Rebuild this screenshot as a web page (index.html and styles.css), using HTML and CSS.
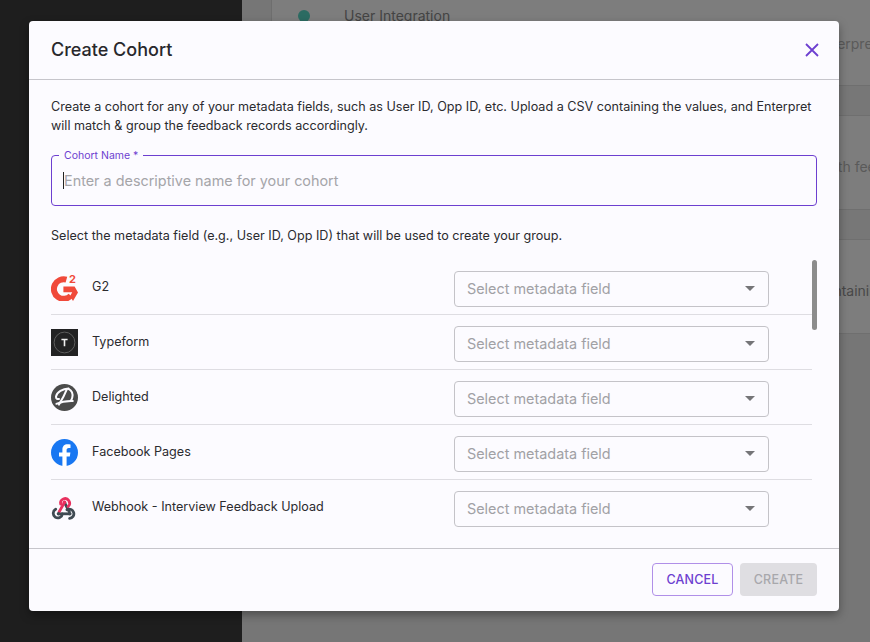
FILE: index.html
```html
<!DOCTYPE html>
<html lang="en">
<head>
<meta charset="utf-8">
<title>Create Cohort</title>
<link rel="stylesheet" href="styles.css">
</head>
<body>
<div class="app">
  <aside class="sidebar"></aside>
  <main class="main">
    <div class="table">
      <div class="bg-row bg-row-first">
        <span class="dot"></span><span class="bg-name">User Integration</span>
        <span class="bg-text bg-text-a">Enterpret</span>
      </div>
      <div class="bg-band"></div>
      <div class="bg-row"><span class="bg-text bg-text-b">with feedback</span></div>
      <div class="bg-band"></div>
      <div class="bg-row"><span class="bg-text bg-text-c">containing</span></div>
    </div>
  </main>
</div>

<section class="modal" role="dialog" aria-label="Create Cohort">
  <header class="modal-head">
    <h2 class="modal-title">Create Cohort</h2>
    <svg class="close" viewBox="0 0 14 14" width="14" height="14" aria-hidden="true"><path d="M1 1l12 12M13 1L1 13"/></svg>
  </header>

  <div class="modal-body">
    <p class="intro">Create a cohort for any of your metadata fields, such as User ID, Opp ID, etc. Upload a CSV containing the values, and Enterpret will match &amp; group the feedback records accordingly.</p>

    <div class="field">
      <span class="field-label">Cohort Name *</span>
      <span class="caret-bar"></span><span class="placeholder">Enter a descriptive name for your cohort</span>
    </div>

    <p class="hint">Select the metadata field (e.g., User ID, Opp ID) that will be used to create your group.</p>

    <div class="list">
      <div class="rows">
        <div class="row">
          <svg class="icon" viewBox="0 0 27 27" aria-hidden="true">
            <path d="M15.400 5.600A9.800 9.800 0 1 0 19.800 21.800" fill="none" stroke="#f0493a" stroke-width="6"/>
            <path d="M12.400 12.400h11.200l3.400 6-5 8.600-3-4.800 2.200-4h-8.800z" fill="#f0493a"/>
            <text x="18" y="8.800" class="g2-two">2</text>
          </svg>
          <span class="row-name">G2</span>
          <div class="select"><span>Select metadata field</span><i class="tri"></i></div>
        </div>
        <div class="row">
          <svg class="icon" viewBox="0 0 27 27" aria-hidden="true">
            <rect width="27" height="27" fill="#222223"/>
            <circle cx="13.500" cy="13.500" r="10.400" fill="none" stroke="#5c5c5c" stroke-width="1"/>
            <path d="M10.400 9.800h6.200v1.500h-2.300v6h-1.600v-6h-2.300z" fill="#f0f0f0"/>
          </svg>
          <span class="row-name">Typeform</span>
          <div class="select"><span>Select metadata field</span><i class="tri"></i></div>
        </div>
        <div class="row">
          <svg class="icon" viewBox="0 0 27 27" aria-hidden="true">
            <circle cx="13.500" cy="13.500" r="13.500" fill="#4b4b4b"/>
            <path d="M17.500 4.400C12 4.600 5.600 8 5 12.600c-.2 1.800 1.200 2.800 3 2.400" fill="none" stroke="#fcfbff" stroke-width="2" stroke-linecap="round"/>
            <path d="M15.800 5.400C14 10 11.400 15 8 20.600" fill="none" stroke="#fcfbff" stroke-width="2" stroke-linecap="round"/>
            <path d="M17.500 4.800c3 1.600 4.600 5 3.800 8.600-.2 1.200-.8 2.400-1.600 3.400" fill="none" stroke="#fcfbff" stroke-width="2" stroke-linecap="round"/>
            <path d="M5.400 19.800c4.600-2 10.600-3 16.400-2.800" fill="none" stroke="#fcfbff" stroke-width="2" stroke-linecap="round"/>
          </svg>
          <span class="row-name">Delighted</span>
          <div class="select"><span>Select metadata field</span><i class="tri"></i></div>
        </div>
        <div class="row">
          <svg class="icon" viewBox="0 0 27 27" aria-hidden="true">
            <circle cx="13.500" cy="13.500" r="13.500" fill="#1877f2"/>
            <path d="M18.800 17.400l.6-3.900h-3.800V11c0-1.100.5-2.100 2.200-2.100h1.700V5.500c-1-.2-2-.3-3-.3-3.100 0-5.100 1.900-5.100 5.300v3h-3.400v3.900h3.400V27h4.200v-9.600z" fill="#fff"/>
          </svg>
          <span class="row-name">Facebook Pages</span>
          <div class="select"><span>Select metadata field</span><i class="tri"></i></div>
        </div>
        <div class="row row-last">
          <svg class="icon" viewBox="0 0 27 27" aria-hidden="true">
            <path d="M7.200 19.800h11.200" fill="none" stroke="#3f4a52" stroke-width="2.800"/>
            <path d="M13.500 8.500L18.800 18.800" fill="none" stroke="#3f4a52" stroke-width="2.800"/>
            <path d="M9.700 10.200a4.500 4.500 0 1 1 7.400 2.300" fill="none" stroke="#e8315f" stroke-width="2.800" stroke-linecap="round"/>
            <path d="M13.500 8.300L8.200 17.800" fill="none" stroke="#e8315f" stroke-width="2.800" stroke-linecap="round"/>
            <path d="M4.700 15.200a4.600 4.600 0 1 0 6.700 4.600M16 15.800a4.600 4.600 0 1 1 2.600 8.600" fill="none" stroke="#3f4a52" stroke-width="2.800" stroke-linecap="round"/>
            <circle cx="7.500" cy="19.800" r="1.800" fill="#3f4a52"/>
            <circle cx="18.800" cy="19.800" r="1.800" fill="#3f4a52"/>
            <circle cx="13.500" cy="8.300" r="1.800" fill="#e8315f"/>
          </svg>
          <span class="row-name">Webhook - Interview Feedback Upload</span>
          <div class="select"><span>Select metadata field</span><i class="tri"></i></div>
        </div>
      </div>
      <div class="scrollbar"></div>
    </div>
  </div>

  <footer class="modal-foot">
    <button class="btn btn-outline" type="button">CANCEL</button>
    <button class="btn btn-disabled" type="button" disabled>CREATE</button>
  </footer>
</section>
</body>
</html>
```

FILE: styles.css
```css
* { box-sizing: border-box; }

html, body {
  margin: 0;
  height: 100%;
  overflow: hidden;
  font-family: Inter, "Liberation Sans", sans-serif;
}

.app {
  display: flex;
  height: 642px;
  width: 870px;
  overflow: hidden;
}

.sidebar {
  width: 242px;
  flex: none;
  background: #1e1e1e;
}

.main {
  flex: 1;
  background: #767676;
  padding-left: 29px;
  overflow: hidden;
}

.table {
  border-left: 1px solid #6e6e6e;
  width: 700px;
}

.bg-row {
  height: 94px;
  background: #7d7d7d;
  border-bottom: 1px solid #6f6f6f;
  display: flex;
  align-items: center;
  white-space: nowrap;
  font-size: 14px;
  color: #4e4e4e;
  position: relative;
}

.bg-row-first {
  height: 86px;
  align-items: flex-start;
}

.bg-band {
  height: 30px;
  background: #777;
  border-bottom: 1px solid #6f6f6f;
}

.dot {
  width: 12px;
  height: 12px;
  margin: 10px 0 0 26px;
  border-radius: 50%;
  background: #2c6b62;
  flex: none;
}

.bg-name {
  margin: 7px 0 0 34px;
  color: #444;
}

.bg-text { position: absolute; transform: translateY(-50%); }
.bg-text-a { left: 544px; top: 43px; color: #5a5a5a; }
.bg-text-b { left: 551px; top: 50px; color: #5a5a5a; }
.bg-text-c { left: 545px; top: 50px; color: #484848; }

.modal {
  position: absolute;
  left: 29px;
  top: 21px;
  width: 810px;
  height: 590px;
  background: #fcfbff;
  border-radius: 4px;
  box-shadow: 0 4px 10px rgba(0, 0, 0, .35);
  display: flex;
  flex-direction: column;
  color: #2b2b2f;
}

.modal-head {
  height: 59px;
  flex: none;
  padding: 0 20px 0 22px;
  border-bottom: 1px solid #c6c5cb;
  display: flex;
  align-items: center;
  justify-content: space-between;
}

.modal-title {
  margin: 0;
  font-size: 18px;
  font-weight: 500;
  line-height: 58px;
  color: #28282c;
}

.close { fill: none; stroke: #6d3fd0; stroke-width: 1.800; }

.modal-body {
  flex: 1;
  min-height: 0;
  padding: 17px 22px 0;
  display: flex;
  flex-direction: column;
}

.intro {
  margin: 0;
  font-size: 12.600px;
  line-height: 19px;
}

.field {
  position: relative;
  margin-top: 20px;
  height: 51px;
  border: 1px solid #6d3fd0;
  border-radius: 4px;
  display: flex;
  align-items: center;
  padding-left: 11px;
}

.field-label {
  position: absolute;
  left: 7px;
  top: -6px;
  padding: 0 5px;
  background: #fcfbff;
  font-size: 10.500px;
  line-height: 12px;
  color: #6d3fd0;
}

.caret-bar {
  width: 1px;
  height: 17px;
  background: #222;
  flex: none;
}

.placeholder {
  font-size: 14.400px;
  color: #a5a5a9;
}

.hint {
  margin: 20px 0 0;
  font-size: 12.600px;
  line-height: 19px;
}

.list {
  position: relative;
  margin-top: 15px;
  flex: 1;
  min-height: 0;
}

.rows { width: 761px; }

.row {
  height: 55px;
  border-bottom: 1px solid #dedde2;
  display: flex;
  align-items: center;
}

.row-last { border-bottom-color: transparent; }

.icon {
  width: 27px;
  height: 27px;
  flex: none;
}

.g2-two {
  font-size: 11px;
  font-weight: 700;
  fill: #f0493a;
  font-family: Inter, sans-serif;
}

.row-name {
  margin-left: 14px;
  font-size: 12.600px;
  line-height: 18px;
  flex: 1;
}

.select {
  width: 315px;
  height: 36px;
  margin: 4px 43px 0 0;
  flex: none;
  border: 1px solid #c4c3c8;
  border-radius: 4px;
  display: flex;
  align-items: center;
  justify-content: space-between;
  padding: 0 13px 2px 12px;
  font-size: 14.400px;
  color: #a1a1a5;
}

.tri {
  width: 0;
  height: 0;
  border-left: 5px solid transparent;
  border-right: 5px solid transparent;
  border-top: 5px solid #757578;
}

.scrollbar {
  position: absolute;
  right: 0;
  top: 0;
  width: 5px;
  height: 70px;
  border-radius: 3px;
  background: #8c8c8c;
}

.modal-foot {
  height: 63px;
  flex: none;
  border-top: 1px solid #c6c5cb;
  display: flex;
  justify-content: flex-end;
  gap: 7px;
  padding: 14px 22px 0;
}

.btn {
  height: 33px;
  border-radius: 4px;
  font-family: inherit;
  font-size: 12.500px;
  font-weight: 500;
  letter-spacing: .2px;
  padding: 0;
}

.btn-outline {
  width: 81px;
  background: transparent;
  border: 1px solid #b08fe8;
  color: #6d3fd0;
}

.btn-disabled {
  width: 77px;
  background: #dfdee2;
  border: 0;
  color: #a8a8ac;
}
```
